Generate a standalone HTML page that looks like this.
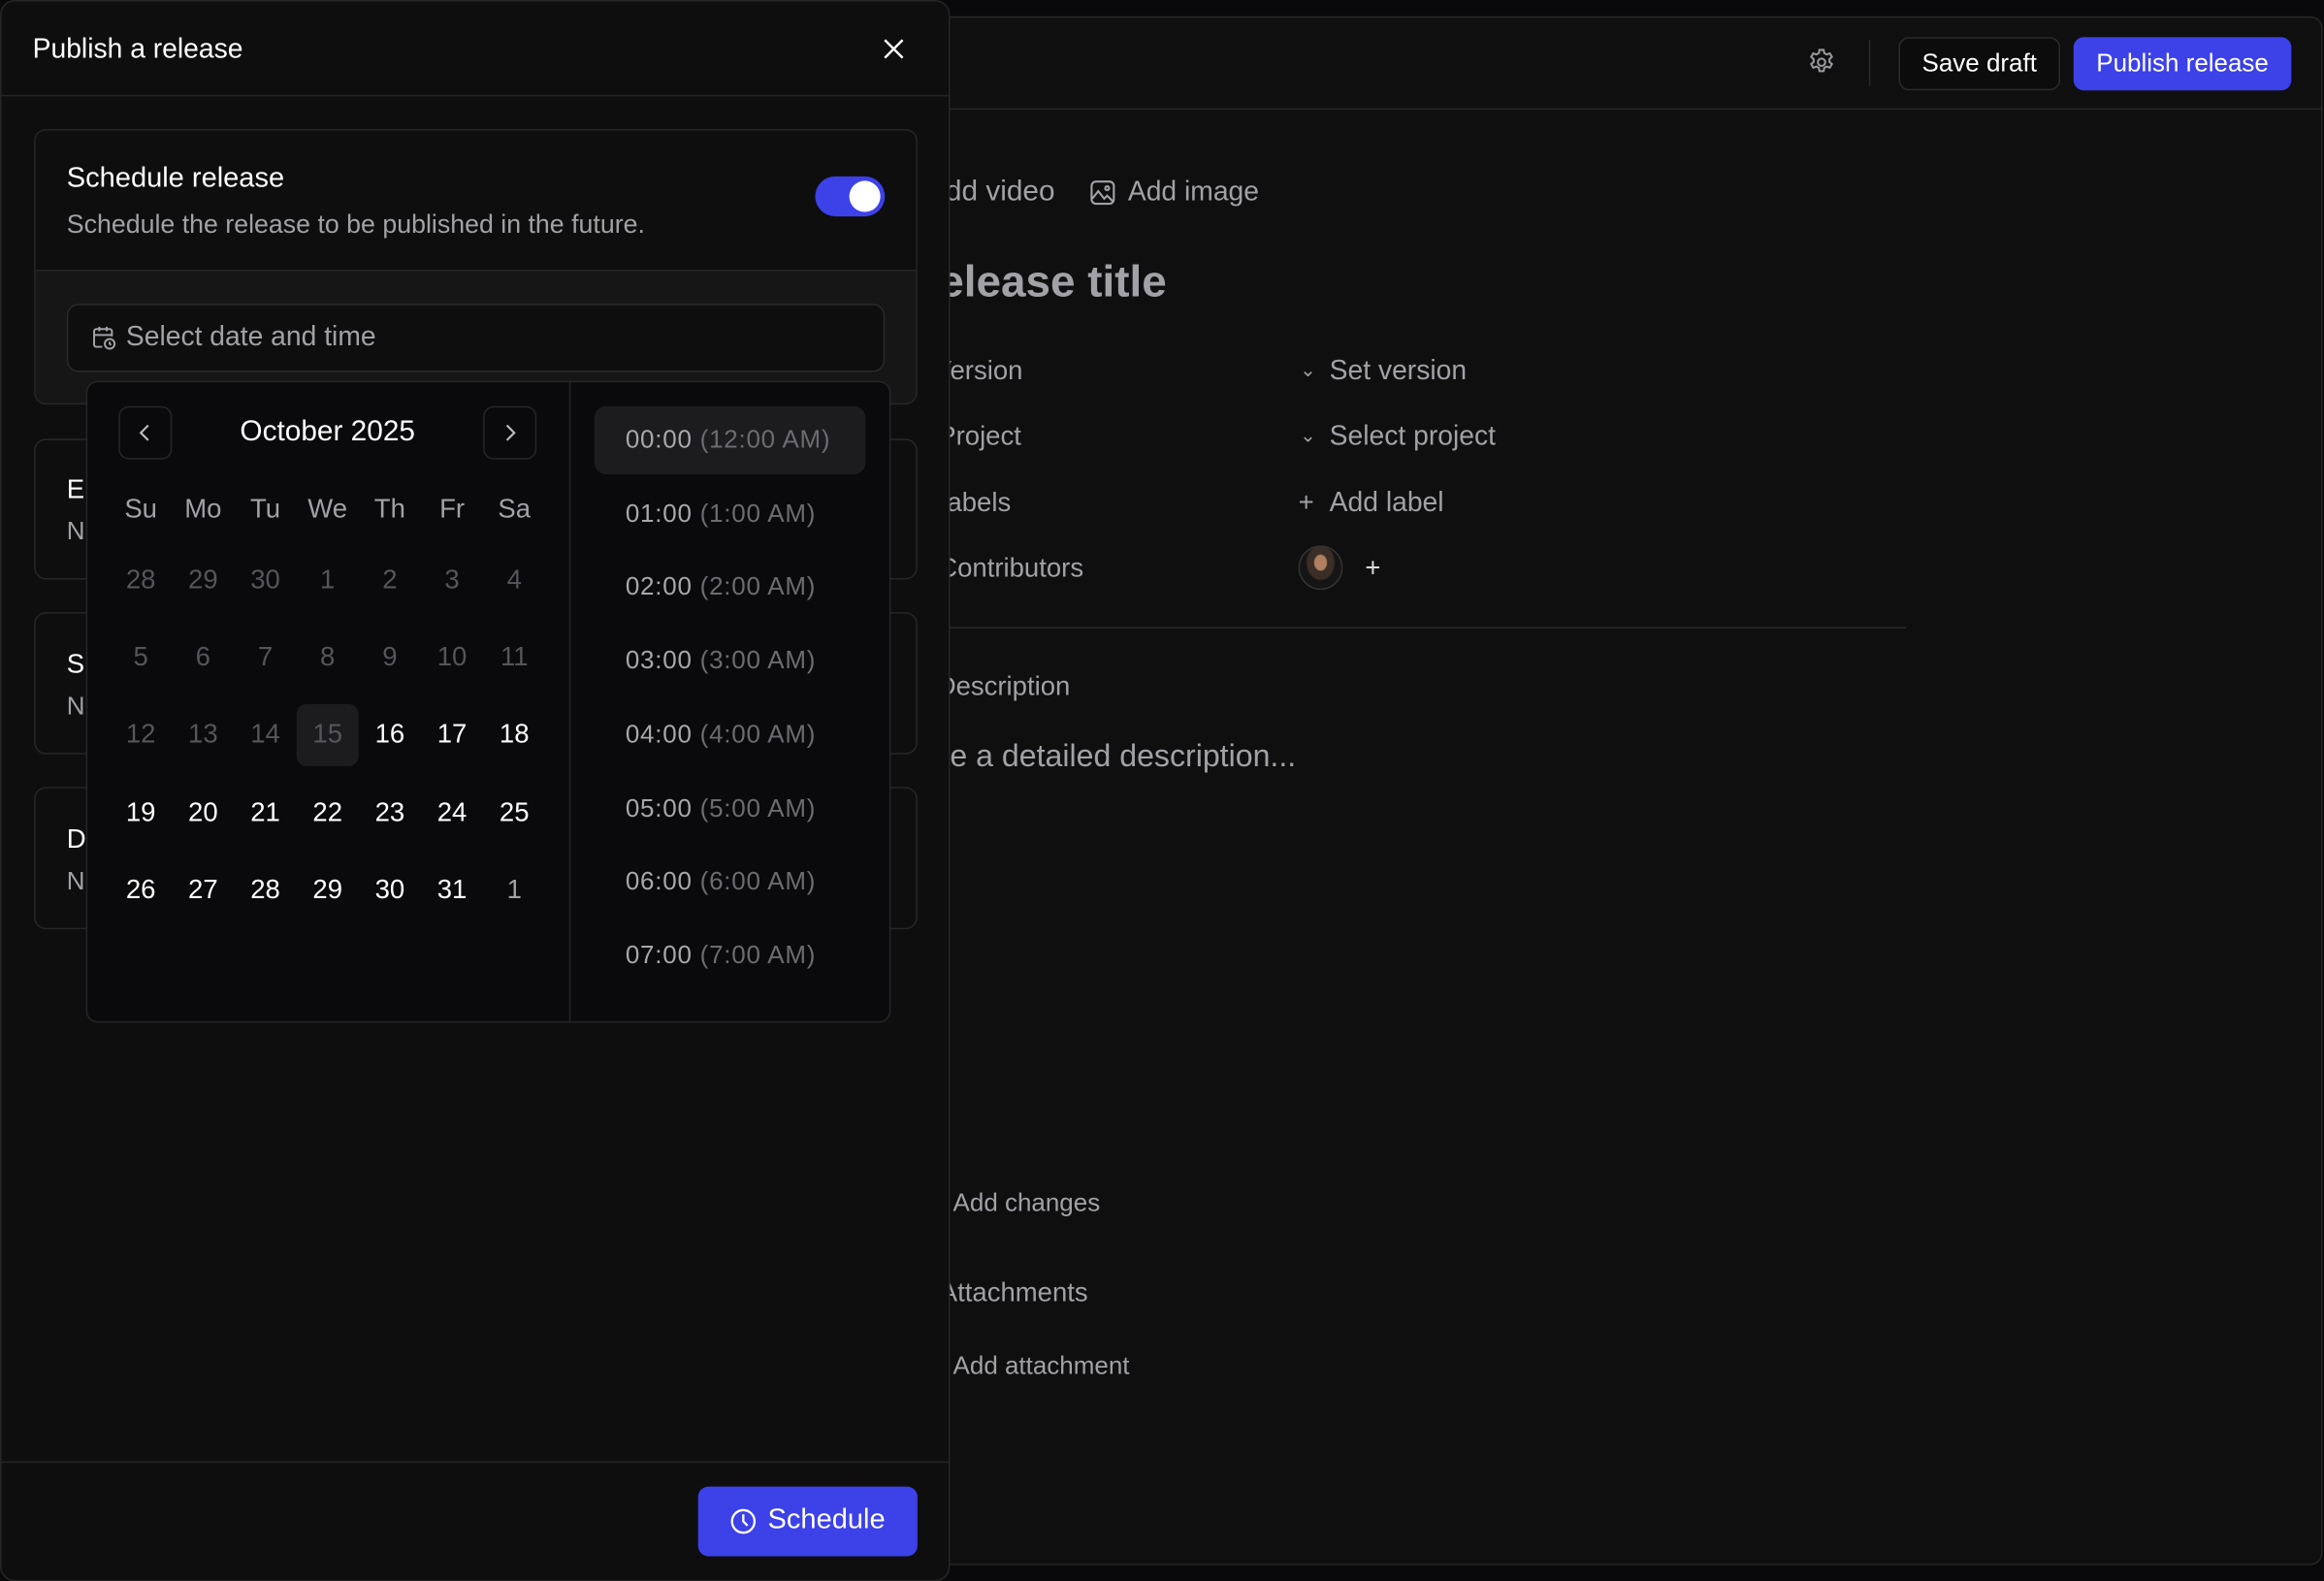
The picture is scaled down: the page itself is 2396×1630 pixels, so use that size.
<!DOCTYPE html>
<html><head><meta charset="utf-8"><style>
*{margin:0;padding:0;box-sizing:border-box}
html,body{width:2396px;height:1630px;background:#09090b;overflow:hidden}
#w{position:absolute;left:0;top:0;width:1568px;height:1067px;transform:scale(1.52806);transform-origin:0 0;font-family:"Liberation Sans",sans-serif;color:#fff}
.a{position:absolute;white-space:nowrap}
.t{position:absolute;white-space:nowrap;line-height:24px}
.g{color:#a1a1a6}
.dim{color:#55555a}
.cal .t{width:42px;text-align:center;font-size:18px}
</style></head><body><div id="w">
<!-- main panel -->
<div class="a" style="left:560px;top:11px;width:1007px;height:1045px;background:#0f0f0f;border:1px solid #262626;border-radius:8px"></div>
<div class="a" style="left:560px;top:73px;width:1007px;height:1px;background:#262626"></div>
<svg class="a" style="left:1219px;top:32px" width="20" height="20" viewBox="0 0 24 24" fill="none" stroke="#9a9a9e" stroke-width="1.6"><path d="M10.3 2h3.4l.5 2.6 2 1.1 2.5-.9 1.7 2.9-2 1.8v2.2l2 1.8-1.7 2.9-2.5-.9-2 1.1-.5 2.6h-3.4l-.5-2.6-2-1.1-2.5.9-1.7-2.9 2-1.8v-2.2l-2-1.8 1.7-2.9 2.5.9 2-1.1z"/><circle cx="12" cy="12" r="3"/></svg>
<div class="a" style="left:1261px;top:27px;width:1px;height:31px;background:#2a2a2a"></div>
<div class="a" style="left:1281px;top:25px;width:109px;height:36px;border:1px solid #2a2a2a;border-radius:7px;background:#0c0c0c;font-size:17px;line-height:34px;text-align:center">Save draft</div>
<div class="a" style="left:1399px;top:25px;width:147px;height:36px;border-radius:7px;background:#3c41e8;font-size:17px;line-height:36px;text-align:center">Publish release</div>
<div class="t g" style="left:625px;top:117px;font-size:19.5px">Add video</div>
<svg class="a" style="left:735px;top:121px" width="18" height="18" viewBox="0 0 18 18" fill="none" stroke="#a1a1a6" stroke-width="1.4"><rect x="1.5" y="1.5" width="15" height="15" rx="3"/><path d="M2 13l4-5 4 5 2-2 4 4"/><circle cx="12" cy="6" r="1.3"/></svg>
<div class="t g" style="left:761px;top:117px;font-size:18.5px">Add image</div>
<div class="a" style="left:612px;top:172px;font-size:30px;font-weight:bold;color:#a1a1a6;line-height:38px">Release title</div>
<div class="t g" style="left:630px;top:238px;font-size:18px">Version</div>
<div class="t g" style="left:633px;top:282px;font-size:18px">Project</div>
<div class="t g" style="left:629px;top:327px;font-size:18px">Labels</div>
<div class="t g" style="left:633px;top:371px;font-size:18px">Contributors</div>
<div class="t g" style="left:877px;top:238px;font-size:13px">⌄</div>
<div class="t g" style="left:897px;top:238px;font-size:18.5px">Set version</div>
<div class="t g" style="left:877px;top:282px;font-size:13px">⌄</div>
<div class="t g" style="left:897px;top:282px;font-size:18.5px">Select project</div>
<div class="t g" style="left:876px;top:327px;font-size:18px">+</div>
<div class="t g" style="left:897px;top:327px;font-size:18.5px">Add label</div>
<div class="a" style="left:876px;top:368px;width:30px;height:30px;border-radius:50%;border:1px solid #333;background:radial-gradient(ellipse at 50% 38%,#b08060 0 20%,#3a2e26 24% 45%,#151515 50%)"></div>
<div class="t" style="left:921px;top:371px;font-size:18px;color:#ddd">+</div>
<div class="a" style="left:560px;top:423px;width:726px;height:1px;background:#2a2a2a"></div>
<div class="t g" style="left:632px;top:451px;font-size:18px">Description</div>
<div class="a g" style="left:604px;top:498px;font-size:21px;line-height:26px">Write a detailed description...</div>
<div class="t g" style="left:643px;top:800px;font-size:17px">Add changes</div>
<div class="t g" style="left:634px;top:860px;font-size:18px">Attachments</div>
<div class="t g" style="left:643px;top:910px;font-size:17px">Add attachment</div>

<!-- modal -->
<div class="a" style="left:0;top:0;width:641px;height:1067px;background:#0e0e0e;border:1px solid #262626;border-radius:10px"></div>
<div class="t" style="left:22px;top:21px;font-size:18.5px">Publish a release</div>
<svg class="a" style="left:595px;top:25px" width="16" height="16" viewBox="0 0 16 16" stroke="#fff" stroke-width="1.6"><path d="M2 2l12 12M14 2L2 14"/></svg>
<div class="a" style="left:1px;top:64px;width:639px;height:1px;background:#262626"></div>
<div class="a" style="left:23px;top:87px;width:596px;height:186px;border:1px solid #262626;border-radius:8px;background:#161616;overflow:hidden"><div style="height:95px;background:#0e0e0e;border-bottom:1px solid #262626"></div></div>
<div class="t" style="left:45px;top:109px;font-size:19px;font-weight:500">Schedule release</div>
<div class="t g" style="left:45px;top:139px;font-size:17.5px">Schedule the release to be published in the future.</div>
<div class="a" style="left:550px;top:119px;width:47px;height:27px;border-radius:14px;background:#3c41e8"><div style="position:absolute;right:3px;top:3px;width:21px;height:21px;border-radius:50%;background:#fff"></div></div>
<div class="a" style="left:45px;top:205px;width:552px;height:46px;border:1px solid #2a2a2a;border-radius:8px;background:#0e0e0e"></div>
<svg class="a" style="left:62px;top:219px" width="17" height="18" viewBox="0 0 17 18" fill="none" stroke="#a1a1a6" stroke-width="1.3"><path d="M7 15H3a1.5 1.5 0 01-1.5-1.5v-9A1.5 1.5 0 013 3h9a1.5 1.5 0 011.5 1.5V8M1.5 7h12M5 1.5v3M10 1.5v3"/><circle cx="12" cy="13" r="3.3"/><path d="M12 11.5V13l1 .8"/></svg>
<div class="t g" style="left:85px;top:215px;font-size:18.5px">Select date and time</div>
<!-- background cards -->
<div class="a" style="left:23px;top:296px;width:596px;height:95px;border:1px solid #262626;border-radius:8px"></div>
<div class="a" style="left:23px;top:413px;width:596px;height:96px;border:1px solid #262626;border-radius:8px"></div>
<div class="a" style="left:23px;top:531px;width:596px;height:96px;border:1px solid #262626;border-radius:8px"></div>
<div class="t" style="left:45px;top:318px;font-size:18px">En</div>
<div class="t g" style="left:45px;top:347px;font-size:17px">N</div>
<div class="t" style="left:45px;top:436px;font-size:18px">S</div>
<div class="t g" style="left:45px;top:465px;font-size:17px">N</div>
<div class="t" style="left:45px;top:554px;font-size:18px">D</div>
<div class="t g" style="left:45px;top:583px;font-size:17px">N</div>
<div class="a" style="left:1px;top:986px;width:639px;height:1px;background:#262626"></div>
<div class="a" style="left:471px;top:1003px;width:148px;height:47px;border-radius:7px;background:#3c41e8"></div>
<svg class="a" style="left:492px;top:1017px" width="19" height="19" viewBox="0 0 20 20" fill="none" stroke="#fff" stroke-width="1.6"><circle cx="10" cy="10" r="8"/><path d="M10 5v5l3 3"/></svg>
<div class="t" style="left:518px;top:1014px;font-size:19px">Schedule</div>

<!-- popover -->
<div class="a cal" style="left:58px;top:257px;width:543px;height:433px;background:#0a0a0c;border:1px solid #262626;border-radius:8px">
<div class="a" style="left:325px;top:0;width:1px;height:431px;background:#262626"></div>
<div class="a" style="left:21px;top:16px;width:36px;height:36px;border:1px solid #262626;border-radius:7px"></div>
<svg class="a" style="left:33px;top:27px" width="12" height="14" viewBox="0 0 12 14" fill="none" stroke="#bbb" stroke-width="1.4"><path d="M8 2L3 7l5 5"/></svg>
<div class="a" style="left:267px;top:16px;width:36px;height:36px;border:1px solid #262626;border-radius:7px"></div>
<svg class="a" style="left:279px;top:27px" width="12" height="14" viewBox="0 0 12 14" fill="none" stroke="#bbb" stroke-width="1.4"><path d="M4 2l5 5-5 5"/></svg>
<div class="t" style="left:62px;top:21px;width:200px;text-align:center;font-size:19.5px">October 2025</div>
<div class="a" style="left:141px;top:217px;width:42px;height:42px;border-radius:7px;background:#1c1c1f"></div>
</div>
<div class="a cal" style="left:58px;top:257px;">
<div class="t g" style="left:16px;top:74px">Su</div><div class="t g" style="left:58px;top:74px">Mo</div><div class="t g" style="left:100px;top:74px">Tu</div><div class="t g" style="left:142px;top:74px">We</div><div class="t g" style="left:184px;top:74px">Th</div><div class="t g" style="left:226px;top:74px">Fr</div><div class="t g" style="left:268px;top:74px">Sa</div>
<div class="t dim" style="left:16px;top:122px">28</div><div class="t dim" style="left:58px;top:122px">29</div><div class="t dim" style="left:100px;top:122px">30</div><div class="t dim" style="left:142px;top:122px">1</div><div class="t dim" style="left:184px;top:122px">2</div><div class="t dim" style="left:226px;top:122px">3</div><div class="t dim" style="left:268px;top:122px">4</div>
<div class="t dim" style="left:16px;top:174px">5</div><div class="t dim" style="left:58px;top:174px">6</div><div class="t dim" style="left:100px;top:174px">7</div><div class="t dim" style="left:142px;top:174px">8</div><div class="t dim" style="left:184px;top:174px">9</div><div class="t dim" style="left:226px;top:174px">10</div><div class="t dim" style="left:268px;top:174px">11</div>
<div class="t dim" style="left:16px;top:226px">12</div><div class="t dim" style="left:58px;top:226px">13</div><div class="t dim" style="left:100px;top:226px">14</div><div class="t dim" style="left:142px;top:226px">15</div><div class="t" style="left:184px;top:226px">16</div><div class="t" style="left:226px;top:226px">17</div><div class="t" style="left:268px;top:226px">18</div>
<div class="t" style="left:16px;top:279px">19</div><div class="t" style="left:58px;top:279px">20</div><div class="t" style="left:100px;top:279px">21</div><div class="t" style="left:142px;top:279px">22</div><div class="t" style="left:184px;top:279px">23</div><div class="t" style="left:226px;top:279px">24</div><div class="t" style="left:268px;top:279px">25</div>
<div class="t" style="left:16px;top:331px">26</div><div class="t" style="left:58px;top:331px">27</div><div class="t" style="left:100px;top:331px">28</div><div class="t" style="left:142px;top:331px">29</div><div class="t" style="left:184px;top:331px">30</div><div class="t" style="left:226px;top:331px">31</div><div class="t g" style="left:268px;top:331px">1</div>
</div>
<div class="a" style="left:401px;top:274px;width:183px;height:46px;border-radius:8px;background:#1c1c1f"></div>
<div class="a" style="left:422px;top:0;font-size:17px;color:#a8a8ac;letter-spacing:0.5px">
<div class="t" style="top:285px">00:00 <span style="color:#6c6c70">(12:00 AM)</span></div>
<div class="t" style="top:335px">01:00 <span style="color:#6c6c70">(1:00 AM)</span></div>
<div class="t" style="top:384px">02:00 <span style="color:#6c6c70">(2:00 AM)</span></div>
<div class="t" style="top:434px">03:00 <span style="color:#6c6c70">(3:00 AM)</span></div>
<div class="t" style="top:484px">04:00 <span style="color:#6c6c70">(4:00 AM)</span></div>
<div class="t" style="top:534px">05:00 <span style="color:#6c6c70">(5:00 AM)</span></div>
<div class="t" style="top:583px">06:00 <span style="color:#6c6c70">(6:00 AM)</span></div>
<div class="t" style="top:633px">07:00 <span style="color:#6c6c70">(7:00 AM)</span></div>
</div>
</div></body></html>
